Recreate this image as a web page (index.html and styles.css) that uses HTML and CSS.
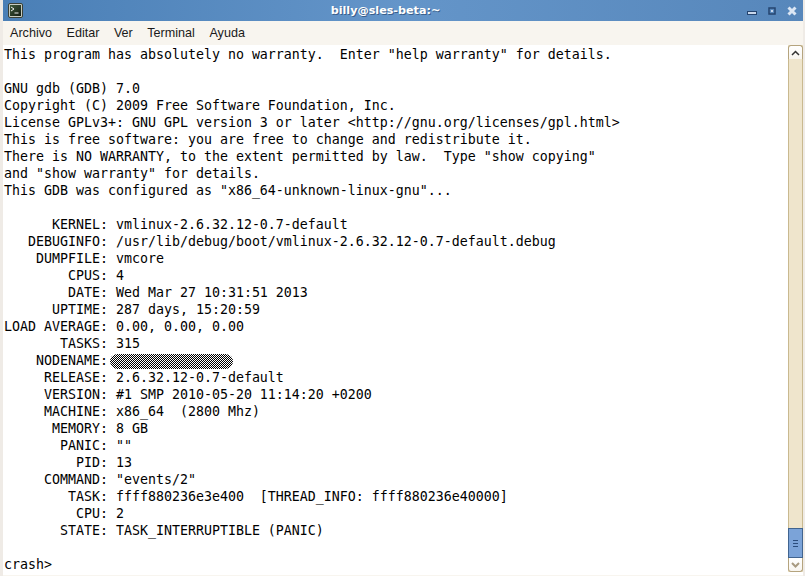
FILE: index.html
```html
<!DOCTYPE html>
<html lang="es">
<head>
<meta charset="utf-8">
<title>billy@sles-beta:~</title>
<link rel="stylesheet" href="styles.css">
</head>
<body>
<div class="window">
  <header class="titlebar">
    <svg class="app-icon" width="15" height="15" viewBox="0 0 15 15"><defs><linearGradient id="scr" x1="0" y1="0" x2="1" y2="1"><stop offset="0" stop-color="#3f5a3a"/><stop offset="1" stop-color="#141c13"/></linearGradient></defs><rect x="0.5" y="0.5" width="14" height="14" rx="1.500" fill="#c6cbbf" stroke="#3a4036"/><rect x="2" y="2" width="11" height="11" fill="url(#scr)"/><path d="M3 4l3 2-3 2M6.500 10h4" fill="none" stroke="#eeeeee"/></svg>
    <div class="title">billy@sles-beta:~</div>
    <div class="controls">
      <svg width="10" height="5" viewBox="0 0 10 5"><rect x="0.500" y="0.500" width="9" height="3" fill="#c9d8ec" stroke="#24446f"/></svg>
      <svg width="8" height="8" viewBox="0 0 8 8"><rect x="1" y="1" width="6" height="6" fill="none" stroke="#24446f" stroke-width="1.500"/><rect x="3" y="3" width="2" height="2" fill="#c9d8ec"/></svg>
      <svg width="10" height="10" viewBox="0 0 10 10"><path d="M1.500 1.500l7 7M8.500 1.500l-7 7" stroke="#dbe6f4" stroke-width="3"/></svg>
    </div>
  </header>
  <nav class="menubar">
    <span>Archivo</span><span>Editar</span><span>Ver</span><span>Terminal</span><span>Ayuda</span>
  </nav>
  <main class="content">
    <pre class="terminal">This program has absolutely no warranty.  Enter "help warranty" for details.

GNU gdb (GDB) 7.0
Copyright (C) 2009 Free Software Foundation, Inc.
License GPLv3+: GNU GPL version 3 or later &lt;http://gnu.org/licenses/gpl.html&gt;
This is free software: you are free to change and redistribute it.
There is NO WARRANTY, to the extent permitted by law.  Type "show copying"
and "show warranty" for details.
This GDB was configured as "x86_64-unknown-linux-gnu"...

      KERNEL: vmlinux-2.6.32.12-0.7-default
   DEBUGINFO: /usr/lib/debug/boot/vmlinux-2.6.32.12-0.7-default.debug
    DUMPFILE: vmcore
        CPUS: 4
        DATE: Wed Mar 27 10:31:51 2013
      UPTIME: 287 days, 15:20:59
LOAD AVERAGE: 0.00, 0.00, 0.00
       TASKS: 315
    NODENAME:<span class="redacted"></span>
     RELEASE: 2.6.32.12-0.7-default
     VERSION: #1 SMP 2010-05-20 11:14:20 +0200
     MACHINE: x86_64  (2800 Mhz)
      MEMORY: 8 GB
       PANIC: ""
         PID: 13
     COMMAND: "events/2"
        TASK: ffff880236e3e400  [THREAD_INFO: ffff880236e40000]
         CPU: 2
       STATE: TASK_INTERRUPTIBLE (PANIC)

crash&gt;</pre>
    <div class="scrollbar">
      <div class="step step-up"><svg width="9" height="6" viewBox="0 0 9 6"><path d="M1 5l3.500-3.500L8 5" fill="none" stroke="#333" stroke-width="1.500"/></svg></div>
      <div class="track"></div>
      <div class="thumb"><i></i><i></i><i></i></div>
      <div class="step step-down"><svg width="9" height="6" viewBox="0 0 9 6"><path d="M1 1l3.500 3.500L8 1" fill="none" stroke="#a89a80" stroke-width="2"/></svg></div>
    </div>
  </main>
</div>
</body>
</html>
```
FILE: styles.css
```css
* { box-sizing: border-box; }
html, body { margin: 0; height: 100%; overflow: hidden; }
body { background: #efebe6; }
.window {
  width: 805px;
  height: 576px;
  padding: 0 2px 0 3px;
  display: flex;
  flex-direction: column;
  font-family: "Liberation Sans", sans-serif;
}
.titlebar {
  height: 21px;
  flex: none;
  display: flex;
  align-items: center;
  position: relative;
  padding: 0 0 0 5px;
  background: linear-gradient(90deg, #4a7fb6 0%, #6495c9 50%, #5787bb 100%);
}
.app-icon { margin-top: -1px; }
.title {
  position: absolute;
  left: 0;
  width: 765px;
  text-align: center;
  color: #fff;
  font-family: "DejaVu Sans", sans-serif;
  font-size: 11.2px;
  font-weight: bold;
  text-shadow: 1px 1px 0 #3a5f8c;
}
.controls {
  margin-left: auto;
  display: flex;
  align-items: center;
  gap: 11px;
  padding-right: 6px;
}
.controls svg:first-child { margin-top: 5px; }
.menubar {
  height: 24px;
  flex: none;
  display: flex;
  align-items: center;
  gap: 14.5px;
  padding-left: 7px;
  background: #f8f5ef;
  color: #1a1a1a;
  font-family: "Liberation Sans", sans-serif;
  font-size: 12.6px;
}
.content {
  flex: 1;
  display: flex;
  min-height: 0;
  background: #fff;
  padding-bottom: 3px;
  border-bottom: 1px solid #f8f5ef;
}
.terminal {
  flex: 1;
  margin: 0;
  padding: 1px 0 0 1px;
  font-family: "DejaVu Sans Mono", monospace;
  font-size: 13.29px;
  line-height: 17px;
  color: #000;
  background: #fff;
  overflow: hidden;
}
.redacted {
  display: inline-block;
  width: 123px;
  height: 15px;
  margin-left: 2px;
  vertical-align: -4px;
  border-radius: 8px;
  background: repeating-conic-gradient(#000 0 25%, #fff 0 50%) 0 0 / 2px 2px;
}
.scrollbar {
  width: 15px;
  flex: none;
  display: flex;
  flex-direction: column;
  background: #efe5cc;
}
.step {
  height: 14px;
  flex: none;
  display: flex;
  align-items: center;
  justify-content: center;
  background: linear-gradient(#fff, #f8f5ef);
  border: 1px solid #b5a47e;
}
.step-up { border-radius: 3px 3px 0 0; border-bottom: 0; }
.step-down { border-radius: 0 0 3px 3px; border-top: 0; }
.track {
  flex: 1;
  background: #efe5cc;
  border-left: 1px solid #c9b98f;
  border-right: 1px solid #c9b98f;
}
.thumb {
  height: 30px;
  flex: none;
  display: flex;
  flex-direction: column;
  align-items: center;
  justify-content: center;
  gap: 2px;
  background: #7ba3d8;
  border: 1px solid #41648f;
}
.thumb i {
  display: block;
  width: 5px;
  height: 1px;
  background: #2b4d7c;
}
```
